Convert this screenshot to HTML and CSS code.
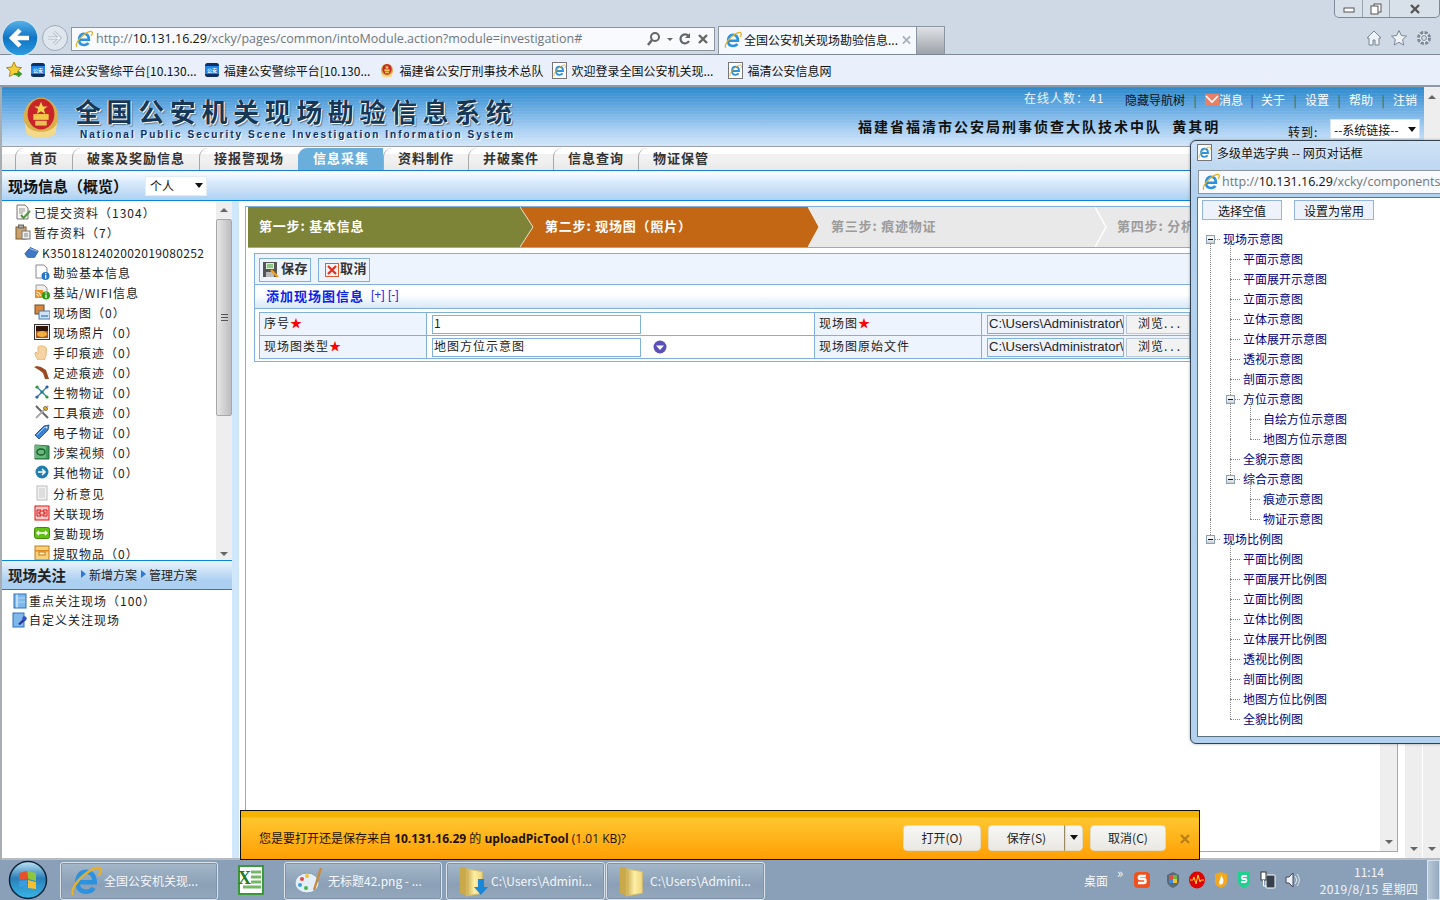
FILE: index.html
```
<!DOCTYPE html>
<html lang="zh-CN">
<head>
<meta charset="utf-8">
<title>全国公安机关现场勘验信息系统</title>
<link rel="stylesheet" href="styles.css">
</head>
<body>
<svg class="defs" width="0" height="0">
  <defs>
    <linearGradient id="gOrb" x1="0" y1="0" x2="0" y2="1"><stop offset="0" stop-color="#bfe3f7"/><stop offset=".45" stop-color="#2b7fb8"/><stop offset="1" stop-color="#38b6e8"/></linearGradient>
    <linearGradient id="gBack" x1="0" y1="0" x2="0" y2="1"><stop offset="0" stop-color="#5ab4ea"/><stop offset=".5" stop-color="#0f74c4"/><stop offset="1" stop-color="#2f9ce0"/></linearGradient>
    <linearGradient id="gFolder" x1="0" y1="0" x2="1" y2="0"><stop offset="0" stop-color="#c9a94a"/><stop offset=".5" stop-color="#fdeea6"/><stop offset="1" stop-color="#f1d67c"/></linearGradient>
    <symbol id="i-ie" viewBox="0 0 24 24"><path d="M5.500 13h13c0-5-2.600-8-6.500-8s-6.500 3.200-6.500 8 2.900 7 6.500 7c2.700 0 4.700-1 5.700-2.800" fill="none" stroke="#2c92df" stroke-width="3.400"/><path d="M2.500 22.500c-2.400-2.600 2-10.500 8.500-15.500S21.500 .8 23 3c.7 1.200-.2 3-1.500 4.800" fill="none" stroke="#e8b022" stroke-width="1.700"/></symbol>
    <symbol id="i-police" viewBox="0 0 16 16"><rect x="1" y="1" width="14" height="14" rx="2.500" fill="#0d2f66"/><rect x="1" y="4" width="14" height="8" fill="#1c86ea"/><text x="8" y="10.200" class="pol-t">公安</text></symbol>
    <symbol id="i-emblem" viewBox="0 0 40 48"><ellipse cx="20" cy="25" rx="18" ry="20" fill="#d9b04c"/><path d="M3 30c4 14 30 14 34 0l-2 13c-8 5-22 5-30 0z" fill="#f3d98a"/><ellipse cx="20" cy="22" rx="14" ry="16" fill="#c8242a"/><rect x="12" y="22" width="16" height="6" fill="#f0c84a"/><path d="M20 9l2 5h5l-4 3 1.500 5-4.500-3-4.500 3 1.500-5-4-3h5z" fill="#f6d64f"/><path d="M14 29h12v5H14z" fill="#eac054"/></symbol>
    <symbol id="i-docok" viewBox="0 0 16 16"><path d="M2 1h8l3 3v11H2z" fill="#f6f6f2" stroke="#777"/><path d="M4 5h6M4 7h6M4 9h4" stroke="#999"/><path d="M6 11l2.500 3L15 7" fill="none" stroke="#4a9a3a" stroke-width="2"/></symbol>
    <symbol id="i-clip" viewBox="0 0 16 16"><rect x="1" y="3" width="10" height="12" fill="#c8a46c" stroke="#7c5a2c"/><rect x="3.500" y="1" width="5" height="3" fill="#aaa" stroke="#666"/><rect x="7" y="7" width="8" height="8" fill="#eee" stroke="#777"/><path d="M9 10h4M9 12h4" stroke="#888"/></symbol>
    <symbol id="i-fold" viewBox="0 0 18 14"><path d="M1 9l6-7 9 4-4 7H4z" fill="#3f79c4" stroke="#2a5a9a"/><path d="M6 3l9 3" stroke="#a8c8ee"/></symbol>
    <symbol id="i-info" viewBox="0 0 16 16"><path d="M2 1h8l3 3v10H2z" fill="#fff" stroke="#888"/><circle cx="11.500" cy="12" r="4" fill="#2777c8"/><rect x="11" y="11" width="1.300" height="3.500" fill="#fff"/><rect x="11" y="9" width="1.300" height="1.300" fill="#fff"/></symbol>
    <symbol id="i-rss" viewBox="0 0 16 16"><path d="M2 1h8l3 3v6H2z" fill="#eee" stroke="#999"/><rect x="1" y="6" width="8" height="8" fill="#f09020"/><path d="M2.500 8a4 4 0 014 4M2.500 10.500a2 2 0 012 2" stroke="#fff" fill="none"/><circle cx="12" cy="11.500" r="4" fill="#2e9a18"/><rect x="11.400" y="10.500" width="1.300" height="3.500" fill="#fff"/><rect x="11.400" y="8.300" width="1.300" height="1.300" fill="#fff"/></symbol>
    <symbol id="i-pics" viewBox="0 0 16 16"><rect x="1" y="1" width="9" height="9" fill="#d9893c" stroke="#6a4a2a"/><rect x="5" y="7" width="11" height="8" fill="#cfe3f7" stroke="#4a78a8"/><rect x="7" y="11" width="7" height="2" fill="#6ba1d8"/></symbol>
    <symbol id="i-photo" viewBox="0 0 16 16"><rect x=".5" y=".5" width="15" height="15" fill="#eee" stroke="#333"/><rect x="2" y="2" width="12" height="12" fill="#a85a1c"/><ellipse cx="8" cy="10" rx="5" ry="3" fill="#f0b040"/><rect x="2" y="2" width="12" height="5" fill="#30140a"/></symbol>
    <symbol id="i-hand" viewBox="0 0 16 16"><path d="M4 16c-2-3-3-5-3-7l1-1 2 2V3l1.500-1L7 2l1 0 1.500 0L11 3l1.500 1-.5 7c0 2-1 4-2 5z" fill="#f5d3a2" stroke="#e4b87c"/></symbol>
    <symbol id="i-foot" viewBox="0 0 16 16"><path d="M0 3l3-1 4 1 5 3 2 6 1 3-4 0-2-6-4-3z" fill="#9a4a20"/></symbol>
    <symbol id="i-bio" viewBox="0 0 16 16"><path d="M2 14L14 2M3 3l10 10" stroke="#3a7a9a" stroke-width="1.300"/><circle cx="3" cy="3" r="1.600" fill="#2a9a3a"/><circle cx="13" cy="3" r="1.600" fill="#2a60b0"/><circle cx="3" cy="13" r="1.600" fill="#2a60b0"/><circle cx="13" cy="13" r="1.600" fill="#2a9a3a"/><circle cx="8" cy="8" r="1.600" fill="#1a7a8a"/></symbol>
    <symbol id="i-tool" viewBox="0 0 16 16"><path d="M2 2l12 12" stroke="#666" stroke-width="2"/><path d="M14 2L2 14" stroke="#aaa" stroke-width="2"/><path d="M11 2l3 3-2 2-3-3z" fill="#e0a820" stroke="#333" stroke-width=".5"/></symbol>
    <symbol id="i-tag" viewBox="0 0 16 16"><path d="M1 11L10 2l5-1-1 5-9 9z" fill="#3f7fd0" stroke="#2a5a9a"/><path d="M3 11l8-8" stroke="#a8c8f0"/><circle cx="12.500" cy="3.500" r="1" fill="#fff"/></symbol>
    <symbol id="i-film" viewBox="0 0 16 16"><path d="M1 1l14 1v13H1z" fill="#3c9a5a" stroke="#2a6a40"/><path d="M1 1l11 1v12H1z" fill="#6ab87a"/><ellipse cx="7" cy="8" rx="4" ry="3" fill="none" stroke="#1a5a30" stroke-width="1.400"/></symbol>
    <symbol id="i-go" viewBox="0 0 16 16"><circle cx="8" cy="8" r="6.500" fill="#1e7fb0"/><path d="M4 8h7M8 5l3 3-3 3" fill="none" stroke="#fff" stroke-width="1.500"/></symbol>
    <symbol id="i-note" viewBox="0 0 16 16"><rect x="3" y="1" width="10" height="14" fill="#f2f2f2" stroke="#bbb"/><path d="M5 4h6M5 6h6M5 8h6M5 10h6M5 12h6" stroke="#c8c8c8"/></symbol>
    <symbol id="i-link" viewBox="0 0 16 16"><rect x="1" y="1" width="14" height="14" fill="#ffc8c8" stroke="#e01010"/><path d="M3 5h4v2H5v2h2v2H3zM13 5H9v2h2v2H9v2h4z" fill="none" stroke="#d01010"/></symbol>
    <symbol id="i-swap" viewBox="0 0 16 12"><rect x=".5" y=".5" width="15" height="11" rx="2" fill="#62c010" stroke="#3f8a08"/><path d="M3 6h10M5 4L3 6l2 2M11 4l2 2-2 2" fill="none" stroke="#fff" stroke-width="1.400"/></symbol>
    <symbol id="i-box" viewBox="0 0 16 16"><rect x="1" y="1" width="14" height="14" fill="#f8d27a" stroke="#c47a1a"/><rect x="1" y="5" width="14" height="1.500" fill="#d88a20"/><rect x="5" y="7" width="6" height="3" fill="#fff3c8" stroke="#c47a1a"/></symbol>
    <symbol id="i-book" viewBox="0 0 14 16"><rect x="1" y="1" width="12" height="14" fill="#7fb8ea" stroke="#2a70b8"/><rect x="3.500" y="1.500" width="1" height="13" fill="#fff"/><path d="M5 5h7M5 9h7" stroke="#b8d8f4"/></symbol>
    <symbol id="i-pin" viewBox="0 0 16 16"><rect x="1" y="1" width="11" height="14" fill="#7fb8ea" stroke="#2a70b8"/><path d="M6 12l6-6 2 2-6 5z" fill="#2c3a9a"/><circle cx="12.500" cy="6.500" r="2.200" fill="#3050c8"/></symbol>
    <symbol id="i-folder" viewBox="0 0 32 36"><path d="M4 3h6l2 3v28l-8-3z" fill="#c9a94a"/><path d="M11 5l17 3v23l-17 3z" fill="url(#gFolder)" stroke="#d9bd66"/></symbol>
  </defs>
</svg>

<div class="screen">
  <header class="ie-top">
    <div class="win-row">
      <div class="win-btns">
        <span class="win-btn"><svg width="12" height="10" viewBox="0 0 12 10"><rect x="1" y="4" width="10" height="4" fill="#fff" stroke="#555"/></svg></span>
        <span class="win-btn win-mid"><svg width="12" height="12" viewBox="0 0 12 12"><rect x="4" y="1" width="7" height="8" fill="#fff" stroke="#555"/><rect x="1" y="3" width="7" height="8" fill="#fff" stroke="#555"/></svg></span>
        <span class="win-btn win-close"><svg width="12" height="12" viewBox="0 0 12 12"><path d="M2 2l8 8M10 2l-8 8" stroke="#555" stroke-width="2.400"/></svg></span>
      </div>
    </div>
    <div class="addr-row">
      <div class="nav-btns">
        <svg width="38" height="38" viewBox="0 0 38 38"><circle cx="19" cy="19" r="18" fill="url(#gBack)" stroke="#cfe0ee" stroke-width="1.500"/><path d="M28 19H12M19 11l-8 8 8 8" fill="none" stroke="#fff" stroke-width="4.500"/></svg>
        <svg width="30" height="30" viewBox="0 0 30 30"><circle cx="15" cy="15" r="12.500" fill="#dfe6ee" stroke="#9eaab8"/><path d="M8 15h12M14 9l6 6-6 6" fill="none" stroke="#aab6c4" stroke-width="3"/><path d="M8 15h12M14 9l6 6-6 6" fill="none" stroke="#eef2f6" stroke-width="1.400"/></svg>
      </div>
      <div class="addr">
        <svg class="ic-ie"><use href="#i-ie"/></svg>
        <span class="url"><span class="dim">http://</span>10.131.16.29<span class="dim">/xcky/pages/common/intoModule.action?module=investigation#</span></span>
        <span class="addr-tools">
          <svg width="16" height="16" viewBox="0 0 16 16"><circle cx="9" cy="6" r="4" fill="none" stroke="#666" stroke-width="2"/><path d="M6 9l-4 5" stroke="#666" stroke-width="2.500"/></svg>
          <svg width="8" height="14" viewBox="0 0 8 14"><path d="M1 6h6L4 9z" fill="#666"/></svg>
          <svg width="14" height="14" viewBox="0 0 14 14"><path d="M11 9a4.500 4.500 0 11-.5-5" fill="none" stroke="#666" stroke-width="2.200"/><path d="M12 1v5H7z" fill="#666"/></svg>
          <svg width="14" height="14" viewBox="0 0 14 14"><path d="M3 3l8 8M11 3l-8 8" stroke="#666" stroke-width="2.400"/></svg>
        </span>
      </div>
      <div class="ie-tab">
        <svg class="ic-ie"><use href="#i-ie"/></svg>
        <span class="tab-title">全国公安机关现场勘验信息...</span>
        <svg width="10" height="10" viewBox="0 0 10 10"><path d="M1 1l8 8M9 1l-8 8" stroke="#aab2bc" stroke-width="2"/></svg>
      </div>
      <div class="ie-newtab"></div>
      <div class="ie-tools">
        <svg width="18" height="18" viewBox="0 0 18 18"><path d="M9 2L2 9h2v7h4v-5h2v5h4V9h2z" fill="#eef3f8" stroke="#7a8794"/></svg>
        <svg width="18" height="18" viewBox="0 0 18 18"><path d="M9 1.500l2.300 5 5.200.6-3.900 3.500 1.100 5.400L9 13.300 4.300 16l1.100-5.400L1.500 7.100l5.200-.6z" fill="#eef3f8" stroke="#7a8794"/></svg>
        <svg width="18" height="18" viewBox="0 0 18 18"><circle cx="9" cy="9" r="5.500" fill="#eef3f8" stroke="#7a8794" stroke-width="3" stroke-dasharray="3 1.300"/><circle cx="9" cy="9" r="2.500" fill="#d0dae6" stroke="#7a8794"/></svg>
      </div>
    </div>
  </header>

  <nav class="favbar">
    <svg class="fav-star" width="18" height="18" viewBox="0 0 18 18"><path d="M9 1l2.300 5 5.200.6-3.900 3.500 1.100 5.400L9 13l-4.700 2.500 1.100-5.400L1.500 6.600l5.200-.6z" fill="#f4cf3a" stroke="#b08a18"/><path d="M9 13h7M13 10.500l3 2.500-3 2.500" fill="none" stroke="#3a9a2a" stroke-width="1.800"/></svg>
    <span class="fav"><svg class="ic"><use href="#i-police"/></svg>福建公安警综平台[10.130...</span>
    <span class="fav m9"><svg class="ic"><use href="#i-police"/></svg>福建公安警综平台[10.130...</span>
    <span class="fav m9"><svg class="ic"><use href="#i-emblem"/></svg>福建省公安厅刑事技术总队</span>
    <span class="fav m15"><span class="pg"><svg class="ic-s"><use href="#i-ie"/></svg></span>欢迎登录全国公安机关现...</span>
    <span class="fav"><span class="pg"><svg class="ic-s"><use href="#i-ie"/></svg></span>福清公安信息网</span>
  </nav>

  <div class="page">
    <div class="site-head">
      <div class="brand">
        <svg class="emblem"><use href="#i-emblem"/></svg>
        <div class="brand-text">
          <div class="brand-cn">全国公安机关现场勘验信息系统</div>
          <div class="brand-en">National Public Security Scene Investigation Information System</div>
        </div>
      </div>
      <div class="head-right">
        <div class="head-links">
          <span class="online">在线人数：41</span>
          <span class="hl-dark">隐藏导航树</span>
          <span class="sep">|</span>
          <span class="hl"><svg class="mail" viewBox="0 0 14 12"><rect width="14" height="12" fill="#e88068"/><path d="M1 2l6 6 6-6" fill="none" stroke="#fff" stroke-width="1.600"/></svg>消息</span>
          <span class="sep s18">|</span><span class="hl">关于</span>
          <span class="sep">|</span><span class="hl">设置</span>
          <span class="sep">|</span><span class="hl">帮助</span>
          <span class="sep">|</span><span class="hl">注销</span>
        </div>
        <div class="head-org">
          <span class="org">福建省福清市公安局刑事侦查大队技术中队&nbsp; 黄其明</span>
          <span class="goto">转到:</span>
          <span class="sys-select">--系统链接--<i class="caret"></i></span>
        </div>
      </div>
      <div class="head-scroll"><i class="up"></i></div>
    </div>

    <div class="main-nav">
      <a class="tab">首页</a>
      <a class="tab">破案及奖励信息</a>
      <a class="tab">接报警现场</a>
      <a class="tab active">信息采集</a>
      <a class="tab">资料制作</a>
      <a class="tab">并破案件</a>
      <a class="tab">信息查询</a>
      <a class="tab">物证保管</a>
    </div>

    <div class="sub-bar">
      <span class="sub-title">现场信息（概览）</span>
      <span class="scope">个人<i class="caret"></i></span>
    </div>

    <div class="work">
      <aside class="side">
        <div class="side-top">
          <ul class="tree">
            <li class="l0"><svg class="ic"><use href="#i-docok"/></svg>已提交资料（1304）</li>
            <li class="l0"><svg class="ic"><use href="#i-clip"/></svg>暂存资料（7）</li>
            <li class="l1"><svg class="ic"><use href="#i-fold"/></svg><span class="code">K3501812402002019080252</span></li>
            <li class="l2"><svg class="ic"><use href="#i-info"/></svg>勘验基本信息</li>
            <li class="l2"><svg class="ic"><use href="#i-rss"/></svg>基站/WIFI信息</li>
            <li class="l2"><svg class="ic"><use href="#i-pics"/></svg>现场图（0）</li>
            <li class="l2"><svg class="ic"><use href="#i-photo"/></svg>现场照片（0）</li>
            <li class="l2"><svg class="ic"><use href="#i-hand"/></svg>手印痕迹（0）</li>
            <li class="l2"><svg class="ic"><use href="#i-foot"/></svg>足迹痕迹（0）</li>
            <li class="l2"><svg class="ic"><use href="#i-bio"/></svg>生物物证（0）</li>
            <li class="l2"><svg class="ic"><use href="#i-tool"/></svg>工具痕迹（0）</li>
            <li class="l2"><svg class="ic"><use href="#i-tag"/></svg>电子物证（0）</li>
            <li class="l2"><svg class="ic"><use href="#i-film"/></svg>涉案视频（0）</li>
            <li class="l2"><svg class="ic"><use href="#i-go"/></svg>其他物证（0）</li>
            <li class="l2 nudge"><svg class="ic"><use href="#i-note"/></svg>分析意见</li>
            <li class="l2"><svg class="ic"><use href="#i-link"/></svg>关联现场</li>
            <li class="l2"><svg class="ic"><use href="#i-swap"/></svg>复勘现场</li>
            <li class="l2"><svg class="ic"><use href="#i-box"/></svg>提取物品（0）</li>
          </ul>
          <div class="vscroll">
            <i class="up"></i>
            <div class="thumb"><span class="grip"></span></div>
            <i class="down"></i>
          </div>
        </div>
        <div class="focus-head">
          <span class="focus-title">现场关注</span>
          <span class="focus-link">新增方案</span>
          <span class="focus-link">管理方案</span>
        </div>
        <ul class="focus-list">
          <li><svg class="ic"><use href="#i-book"/></svg>重点关注现场（100）</li>
          <li><svg class="ic"><use href="#i-pin"/></svg>自定义关注现场</li>
        </ul>
      </aside>

      <div class="strip"></div>

      <div class="frame">
        <main class="content">
          <div class="steps">
            <div class="step s1">第一步: 基本信息</div>
            <svg class="chev" viewBox="0 0 14 41" preserveAspectRatio="none"><rect width="14" height="41" fill="#c46715"/><path d="M0 0l13 20.500L0 41z" fill="#7d8438"/><path d="M0 0l13 20.500L0 41" fill="none" stroke="#fff" stroke-opacity=".8"/></svg>
            <div class="step s2">第二步: 现场图（照片）</div>
            <svg class="chev" viewBox="0 0 14 41" preserveAspectRatio="none"><rect width="14" height="41" fill="#e9e9e9"/><path d="M0 0l11 20.500L0 41z" fill="#c46715"/><path d="M0 0l11 20.500L0 41" fill="none" stroke="#fff" stroke-opacity=".8"/></svg>
            <div class="step s3">第三步: 痕迹物证</div>
            <svg class="chev" viewBox="0 0 14 41" preserveAspectRatio="none"><path d="M0 0l11 20.500L0 41" fill="none" stroke="#fff" stroke-width="1.500"/></svg>
            <div class="step s4">第四步: 分析意见</div>
          </div>
          <section class="panel">
            <div class="toolbar">
              <button class="tbtn"><svg width="18" height="18" viewBox="0 0 18 18"><rect x="1" y="1" width="14" height="15" fill="#555"/><rect x="4" y="2" width="8" height="6" fill="#dff0d8"/><path d="M5 4h6M5 6h6" stroke="#3a9a3a"/><rect x="4" y="11" width="8" height="5" fill="#bbb"/><path d="M9 9l7 7" stroke="#e8a030" stroke-width="2.400"/></svg>保存</button>
              <button class="tbtn"><svg width="14" height="14" viewBox="0 0 14 14"><rect x=".5" y=".5" width="13" height="13" fill="#f4f4f4" stroke="#e25a30"/><path d="M3 3l8 8M11 3l-8 8" stroke="#e03020" stroke-width="2.200"/></svg>取消</button>
            </div>
            <div class="panel-head"><span class="panel-title">添加现场图信息</span><span class="pm">[+] [-]</span></div>
            <table class="form">
              <colgroup><col class="c1"><col class="c2"><col class="c3"><col class="c4"></colgroup>
              <tr>
                <th>序号<span class="star">★</span></th>
                <td class="val"><span class="inp">1</span></td>
                <th>现场图<span class="star">★</span></th>
                <th class="file"><span class="file-in">C:\Users\Administrator\</span><span class="browse">浏览<span class="dots">...</span></span></th>
              </tr>
              <tr>
                <th>现场图类型<span class="star">★</span></th>
                <td class="val"><span class="inp">地图方位示意图</span><svg class="pick" width="14" height="14" viewBox="0 0 14 14"><circle cx="7" cy="7" r="6.500" fill="#5a50b8"/><path d="M3 5.500h8L7 10z" fill="#fff"/></svg></td>
                <th>现场图原始文件</th>
                <th class="file"><span class="file-in">C:\Users\Administrator\</span><span class="browse">浏览<span class="dots">...</span></span></th>
              </tr>
            </table>
          </section>
        </main>
        <div class="vbar inner"><i class="up"></i><i class="down"></i></div>
      </div>

      <div class="gap"></div>
      <div class="vbar"><i class="down"></i></div>
      <div class="vbar"><i class="down"></i></div>
    </div>
  </div>

  <footer class="taskbar">
    <svg class="orb" width="40" height="40" viewBox="0 0 40 40"><circle cx="20" cy="20" r="18.500" fill="url(#gOrb)" stroke="#10243a" stroke-width="1.500"/><path d="M11 13l8-2v8l-8 1z" fill="#e8502a"/><path d="M20 11l8 2v8l-8-2z" fill="#8cc63f"/><path d="M11 21l8-1v8l-8-1z" fill="#3a9be0"/><path d="M20 20l8 2v7l-8-1z" fill="#f6c02c"/></svg>
    <span class="tb-btn w158 first"><svg class="tb-ie"><use href="#i-ie"/></svg>全国公安机关现...</span>
    <span class="tb-plain"><svg width="32" height="32" viewBox="0 0 32 32"><path d="M4 2h24v28H4z" fill="#fff" stroke="#3a9a3a" stroke-width="2"/><path d="M16 8h10M16 13h10M16 18h10M8 23h18" stroke="#74b868" stroke-width="3"/><text x="3" y="20" class="xls">X</text></svg></span>
    <span class="tb-btn w158"><svg width="30" height="32" viewBox="0 0 30 32"><ellipse cx="13" cy="18" rx="12" ry="10" fill="#e4eef8" stroke="#8aa0b8"/><circle cx="8" cy="14" r="2" fill="#e24a3a"/><circle cx="13" cy="11" r="2" fill="#f2c230"/><circle cx="6" cy="20" r="2" fill="#3aa0e0"/><circle cx="12" cy="23" r="2" fill="#4ab84a"/><path d="M27 3l-7 22" stroke="#c88a3a" stroke-width="2.400"/></svg>无标题42.png - ...</span>
    <span class="tb-btn w159"><svg class="tb-fold"><use href="#i-folder"/></svg><svg class="dl" width="14" height="18" viewBox="0 0 14 18"><path d="M4 1h6v8h4l-7 8-7-8h4z" fill="#1a88d8"/></svg>C:\Users\Admini...</span>
    <span class="tb-btn w159"><svg class="tb-fold"><use href="#i-folder"/></svg>C:\Users\Admini...</span>
    <span class="tb-fill"></span>
    <span class="desk">桌面</span>
    <span class="chevs">»</span>
    <span class="tray">
      <svg class="tray-s" width="18" height="18" viewBox="0 0 18 18"><rect x="1" y="1" width="16" height="16" rx="4" fill="#f0521f"/><path d="M13 5H7c-1.500 0-1.500 3 0 3h4c2 0 2 4 0 4H5" fill="none" stroke="#fff" stroke-width="2.400"/></svg>
      <svg width="14" height="18" viewBox="0 0 14 18"><path d="M7 1l6 3v6c0 4-4 6-6 7-2-1-6-3-6-7V4z" fill="#5a6a78"/><rect x="3" y="4" width="4" height="4" fill="#e24a3a"/><rect x="7" y="4" width="4" height="4" fill="#6ab83a"/><rect x="3" y="8" width="4" height="4" fill="#3a8ae0"/><rect x="7" y="8" width="4" height="4" fill="#f2c230"/></svg>
      <svg width="16" height="18" viewBox="0 0 16 18"><ellipse cx="8" cy="9" rx="8" ry="8.500" fill="#e00000"/><path d="M1 9h3l1-3 2 7 2-9 2 7 1-2h3" fill="none" stroke="#f4e020"/></svg>
      <svg width="14" height="18" viewBox="0 0 14 18"><path d="M7 1l6 2v7c0 4-3 6-6 7-3-1-6-3-6-7V3z" fill="#f2a81e"/><path d="M7 4c2 3 3 5 2 8-1 2-4 2-4 0 0-2 2-4 2-8z" fill="#fff"/></svg>
      <svg width="14" height="18" viewBox="0 0 14 18"><path d="M7 1h6v9c0 4-3 6-6 7-3-1-6-3-6-7V1z" fill="#1fd08e"/><path d="M10 5H6c-1.500 0-1.500 3 0 3h2c2 0 2 3 0 3H4" fill="none" stroke="#fff" stroke-width="1.800"/></svg>
      <svg width="16" height="18" viewBox="0 0 16 18"><rect x="6" y="4" width="9" height="13" rx="1" fill="#35404c" stroke="#fff"/><rect x="1" y="1" width="5" height="8" fill="#fff" stroke="#333"/><path d="M3.500 9v6h3" fill="none" stroke="#fff"/></svg>
      <svg width="16" height="18" viewBox="0 0 16 18"><path d="M1 6h3l4-4v14l-4-4H1z" fill="#eef2f6" stroke="#445"/><path d="M10 5c2 2 2 6 0 8M12 3c3 3 3 9 0 12" fill="none" stroke="#e4eaf0"/></svg>
    </span>
    <span class="clock"><span>11:14</span><span class="date">2019/8/15 星期四</span></span>
    <span class="show-desk"></span>
  </footer>

  <div class="dialog">
    <div class="dlg-title"><span class="pg"><svg class="ic-s"><use href="#i-ie"/></svg></span>多级单选字典 -- 网页对话框</div>
    <div class="dlg-addr"><svg class="ic-ie"><use href="#i-ie"/></svg><span class="url"><span class="dim">http://</span>10.131.16.29<span class="dim">/xcky/components/</span></span></div>
    <div class="dlg-body">
      <div class="dlg-btns"><button class="dbtn">选择空值</button><button class="dbtn">设置为常用</button></div>
      <ul class="dict">
        <li class="open"><i class="tog"></i>现场示意图
          <ul>
            <li>平面示意图</li><li>平面展开示意图</li><li>立面示意图</li><li>立体示意图</li><li>立体展开示意图</li><li>透视示意图</li><li>剖面示意图</li>
            <li class="open"><i class="tog"></i>方位示意图
              <ul><li>自绘方位示意图</li><li>地图方位示意图</li></ul>
            </li>
            <li>全貌示意图</li>
            <li class="open"><i class="tog"></i>综合示意图
              <ul><li>痕迹示意图</li><li>物证示意图</li></ul>
            </li>
          </ul>
        </li>
        <li class="open"><i class="tog"></i>现场比例图
          <ul>
            <li>平面比例图</li><li>平面展开比例图</li><li>立面比例图</li><li>立体比例图</li><li>立体展开比例图</li><li>透视比例图</li><li>剖面比例图</li><li>地图方位比例图</li><li>全貌比例图</li>
          </ul>
        </li>
      </ul>
    </div>
  </div>

  <div class="dlbar">
    <div class="dl-msg">您是要打开还是保存来自 <b>10.131.16.29</b> 的 <b>uploadPicTool</b> (1.01 KB)?</div>
    <div class="dl-acts">
      <button class="dl-btn w78">打开(O)</button>
      <span class="dl-split"><button class="dl-btn w77">保存(S)</button><button class="dl-btn w18"><i class="caret"></i></button></span>
      <button class="dl-btn w76">取消(C)</button>
      <svg class="dl-x" width="10" height="10" viewBox="0 0 10 10"><path d="M1 1l8 8M9 1l-8 8" stroke="#b8801a" stroke-width="2.400"/></svg>
    </div>
  </div>
</div>
</body>
</html>
```

FILE: styles.css
```
* { box-sizing: border-box; }
html, body { margin: 0; padding: 0; }
body { font-family: "Noto Sans CJK SC", sans-serif; font-size: 12px; color: #111; overflow: hidden; background: #fff; }
ul { list-style: none; margin: 0; padding: 0; }
.defs { position: absolute; }
.screen { position: relative; width: 1440px; height: 900px; display: flex; flex-direction: column; overflow: hidden; }

.ic { width: 16px; height: 16px; flex: none; }
.ic-ie { width: 18px; height: 18px; flex: none; }
.ic-s { width: 13px; height: 13px; }
.pol-t { font: 700 5px "Noto Sans CJK SC", sans-serif; fill: #fff; text-anchor: middle; }
.dim { color: #6f7780; }
.url { font-family: "Open Sans", "Noto Sans CJK SC", sans-serif; font-size: 12.500px; line-height: 16px; color: #111; white-space: nowrap; }

/* IE chrome */
.ie-top { height: 55px; background: #cfd9e5; flex: none; border-bottom: 1px solid #7e8a96; }
.win-row { height: 26px; display: flex; justify-content: flex-end; }
.win-btns { width: 106px; height: 18px; margin-left: auto; display: flex; border: 1px solid #7c8a98; border-top: 0; border-radius: 0 0 5px 5px; background: #d8e1ea; }
.win-btn { flex: none; width: 27px; display: flex; align-items: center; justify-content: center; }
.win-mid { border-left: 1px solid #9aa6b2; border-right: 1px solid #9aa6b2; width: 28px; }
.win-close { flex: 1; width: auto; }
.addr-row { display: flex; height: 28px; align-items: flex-start; }
.nav-btns { width: 71px; height: 28px; display: flex; margin-top: -2px; padding-left: 1px; align-items: center; flex: none; }
.nav-btns svg + svg { margin-left: 1px; }
.addr { width: 644px; height: 24px; margin-top: 1px; background: #f8fafd; border: 1px solid #8b96a2; display: flex; align-items: center; padding: 0 4px 0 3px; flex: none; }
.addr .url { margin-left: 3px; flex: 1; padding-bottom: 1px; }
.addr-tools { display: flex; align-items: center; gap: 4px; }
.ie-tab { width: 199px; height: 28px; margin-left: 3px; background: #f5f9fe; border: 1px solid #8b96a2; border-bottom: 0; display: flex; align-items: center; padding: 0 5px 2px; font-size: 12px; color: #111; flex: none; }
.tab-title { margin: 0 4px 0 2px; white-space: nowrap; flex: 1; }
.ie-newtab { width: 28px; height: 28px; background: linear-gradient(#e0e2e6, #9da2a8); border: 1px solid #8b96a2; border-left: 0; border-bottom: 0; flex: none; }
.ie-tools { margin-left: auto; display: flex; gap: 7px; padding: 3px 7px 0 0; }

.favbar { height: 32px; flex: none; background: #e9f0fb; border-bottom: 2px solid #8f9aa5; display: flex; align-items: center; padding-left: 5px; }
.fav-star { margin-right: 7px; }
.fav { display: flex; align-items: center; gap: 4px; white-space: nowrap; margin-right: 7px; font-size: 12px; color: #111; }
.fav.m9 { margin-right: 9px; }
.fav.m15 { margin-right: 15px; }
.pg { width: 15px; height: 17px; background: #fff; border: 1px solid #777; display: flex; align-items: center; justify-content: center; flex: none; }

/* page */
.page { flex: 1; min-height: 0; display: flex; flex-direction: column; border-left: 2px solid #a8adb2; }
.site-head { height: 60px; flex: none; display: flex; background: repeating-linear-gradient(#ffffff0f 0 1px, #00000000 1px 3px), linear-gradient(#2b89cd, #6fafe4 40%, #a8cff2 72%, #d3e6f9); border-bottom: 1px solid #9aa0a6; }
.brand { width: 830px; flex: none; display: flex; padding: 9px 0 0 19px; }
.emblem { width: 40px; height: 46px; margin-top: -3px; }
.brand-text { margin-left: 14px; }
.brand-cn { font-size: 26px; line-height: 30px; font-weight: 700; letter-spacing: 5.600px; color: #173757; white-space: nowrap; text-shadow: 1px 1px 0 #fff, -1px 0 0 #dfeeff, 2px 2px 1px #5a7a9a; }
.brand-en { margin: 3px 0 0 5px; font-family: "Liberation Sans", sans-serif; font-weight: 700; font-size: 10px; line-height: 12px; letter-spacing: 2.030px; color: #0d2f66; white-space: nowrap; text-shadow: 1px 1px 0 #fff; }
.head-right { flex: 1; min-width: 0; display: flex; flex-direction: column; }
.head-links { height: 22px; padding-top: 3px; display: flex; align-items: center; white-space: nowrap; font-size: 12px; }
.online { width: 101px; margin-left: 192px; color: #eef6ff; letter-spacing: 1px; font-size: 12px; margin-top: -4px; }
.hl-dark { color: #111; }
.hl { color: #fff; display: flex; align-items: center; }
.sep { color: #456; width: 20px; text-align: center; }
.sep.s18 { width: 18px; }
.mail { width: 14px; height: 12px; }
.head-org { display: flex; align-items: center; margin-top: 8px; white-space: nowrap; }
.org { margin: -5px 0 0 26px; width: 430px; font-size: 14px; font-weight: 700; letter-spacing: 2px; color: #111; }
.goto { letter-spacing: 1px; margin-top: 6px; color: #111; width: 42px; }
.sys-select { width: 90px; height: 20px; margin-top: 1px; background: #fff; border: 1px solid #d9e6f2; display: flex; align-items: center; padding-left: 3px; font-size: 12px; }
.caret { display: inline-block; border-top: 5px solid #111; border-left: 4px solid transparent; border-right: 4px solid transparent; }
.sys-select .caret, .scope .caret { margin-left: auto; margin-right: 3px; }
.head-scroll { width: 16px; background: #eeeeee; flex: none; display: flex; justify-content: center; padding-top: 8px; }
.up { display: block; border-bottom: 4px solid #666; border-left: 4px solid transparent; border-right: 4px solid transparent; width: 0; height: 0; }
.down { display: block; border-top: 4px solid #666; border-left: 4px solid transparent; border-right: 4px solid transparent; width: 0; height: 0; }

.main-nav { height: 24px; flex: none; display: flex; padding-left: 13px; background: linear-gradient(#fff 0, #fff 30%, #f1f1f1 30%, #f1f1f1 55%, #e8e8e8 100%); border-bottom: 1px solid #1a80c8; }
.tab { padding: 0 14px; font-size: 13px; font-weight: 700; letter-spacing: 1px; line-height: 20px; color: #333; border-left: 1px solid #a8a8a8; border-radius: 9px 0 0 0; white-space: nowrap; margin-top: 1px; }
.tab.active { background: #6aaedc; color: #fff; border-left-color: #6aaedc; }

.sub-bar { height: 29px; flex: none; display: flex; align-items: center; padding: 0 0 0 6px; background: linear-gradient(#fff 0, #dcecfb 35%, #aed1f2 100%); }
.sub-title { width: 137px; font-size: 15px; font-weight: 700; color: #111; white-space: nowrap; }
.scope { width: 62px; height: 20px; background: #fff; display: flex; align-items: center; padding-left: 4px; border: 1px solid #e2edf7; font-size: 12px; }

.work { flex: 1; min-height: 0; display: flex; border-top: 1px solid #0a84d8; border-bottom: 2px solid #b6bcc2; }
.side { width: 230px; flex: none; display: flex; flex-direction: column; background: #fff; }
.side-top { height: 359px; display: flex; overflow: hidden; flex: none; }
.tree { flex: 1; min-width: 0; padding-top: 1px; overflow: hidden; font-size: 12px; letter-spacing: 1px; color: #222; }
.tree li { height: 20px; display: flex; align-items: center; white-space: nowrap; }
.tree li .ic { margin-right: 3px; }
.tree .l0 { padding-left: 13px; }
.tree .l1 { padding-left: 22px; }
.tree .l2 { padding-left: 32px; }
.tree .nudge { margin-top: 1px; }
.code { letter-spacing: .350px; margin-left: -1px; }
.vscroll { width: 16px; flex: none; background: #eeeeee; display: flex; flex-direction: column; align-items: center; padding-top: 7px; }
.thumb { width: 16px; height: 197px; margin-top: 7px; background: linear-gradient(90deg, #e6e6e6, #bdbdbd); border: 1px solid #a8a8a8; border-radius: 2px; display: flex; align-items: center; justify-content: center; }
.grip { width: 7px; height: 7px; border-top: 1px solid #555; border-bottom: 1px solid #555; background: linear-gradient(#0000 45%, #555 45%, #555 55%, #0000 55%); }
.vscroll .down { margin-top: auto; margin-bottom: 4px; }
.focus-head { height: 30px; flex: none; display: flex; align-items: center; padding: 0 0 2px 6px; white-space: nowrap; background: linear-gradient(#eaf3fc, #acd0f1 70%); border-top: 1px solid #0a84d8; border-bottom: 1px solid #0a84d8; }
.focus-title { width: 73px; font-size: 14.500px; font-weight: 700; color: #222; }
.focus-link { display: flex; align-items: center; font-size: 12px; color: #222; }
.focus-link::before { content: ""; border-left: 5px solid #2f78d8; border-top: 4px solid transparent; border-bottom: 4px solid transparent; margin-right: 3px; }
.focus-link + .focus-link { margin-left: 4px; }
.focus-list { padding: 1px 0 0 10px; letter-spacing: 1px; color: #222; }
.focus-list li { height: 19px; display: flex; align-items: center; white-space: nowrap; gap: 1px; }
.strip { width: 7px; flex: none; background: #cfe6fb; }
.frame { width: 1153px; flex: none; margin: 5px 0 6px 6px; border: 1px solid #80b0dc; background: #fff; display: flex; overflow: hidden; }
.content { flex: 1; min-width: 0; padding-left: 2px; overflow: hidden; }
.steps { height: 41px; display: flex; background: #e9e9e9; border-bottom: 1px solid #80b0dc; }
.step { height: 40px; line-height: 38px; font-size: 13px; font-weight: 700; letter-spacing: .8px; white-space: nowrap; flex: none; }
.chev { width: 14px; height: 40px; flex: none; }
.s1 { width: 272px; padding-left: 11px; background: #7d8438; color: #fff; }
.s2 { width: 274px; padding-left: 11px; background: #c46715; color: #fff; }
.s3 { width: 273px; padding-left: 9px; color: #9c9c9c; }
.s4 { width: 260px; padding-left: 8px; color: #9c9c9c; }
.panel { margin: 5px 3px 0 6px; border: 1px solid #80b0dc; height: 109px; background: #fff; }
.toolbar { height: 31px; background: #edf4fd; border-bottom: 1px solid #80b0dc; display: flex; align-items: center; gap: 7px; padding: 1px 0 0 4px; }
.tbtn { height: 24px; width: 52px; background: #edf4fd; border: 1px solid #80b0dc; padding: 0 0 4px 2px; font: 700 13px "Noto Sans CJK SC", sans-serif; letter-spacing: .6px; color: #333; display: flex; align-items: center; white-space: nowrap; }
.tbtn svg { flex: none; margin: 4px 1px 0 0; }
.tbtn + .tbtn { padding-left: 6px; }
.panel-head { height: 24px; background: linear-gradient(#fff 40%, #d8e8f8); border-bottom: 1px solid #80b0dc; display: flex; align-items: center; padding: 0 0 3px 11px; }
.panel-title { font-size: 13px; font-weight: 700; letter-spacing: 1px; color: #0a24e8; width: 105px; white-space: nowrap; }
.pm { font-family: "Liberation Sans", sans-serif; font-size: 12px; color: #2a2ae0; }
.form { border-collapse: collapse; table-layout: fixed; width: 930px; margin: 3px 0 0 4px; }
.c1 { width: 167px; } .c2 { width: 388px; } .c3 { width: 167px; } .c4 { width: 208px; }
.form th, .form td { height: 23px; line-height: 15px; border: 1px solid #80b0dc; padding: 0 0 4px 4px; font-size: 12px; font-weight: 400; text-align: left; letter-spacing: 1px; white-space: nowrap; overflow: hidden; color: #222; }
.form th { background: #edf4fd; }
.form .val { background: #fff; padding: 0 0 0 5px; }
.star { color: #f00; letter-spacing: 0; }
.inp { display: inline-block; vertical-align: middle; width: 209px; height: 19px; line-height: 14px; border: 1px solid #80b0dc; padding-left: 1px; background: #fff; }
.pick { vertical-align: middle; margin-left: 12px; }
.form .file { padding: 0 0 0 5px; }
.file-in { display: inline-block; vertical-align: middle; width: 137px; height: 19px; padding-left: 1px; border: 1px solid #80b0dc; background: #edf3f9; overflow: hidden; font: 13px/15px "Liberation Sans", sans-serif; letter-spacing: 0; }
.browse { display: inline-block; vertical-align: middle; width: 70px; height: 19px; line-height: 14px; padding-left: 11px; margin-left: 2px; border: 1px solid #b8c8d8; background: #f2f2f2; letter-spacing: 1px; }
.dots { letter-spacing: 3px; }
.vbar { width: 17px; flex: none; background: #eeeeee; display: flex; flex-direction: column; align-items: center; padding: 0 0 7px; justify-content: flex-end; }
.vbar.inner { width: 17px; }
.vbar .up { margin-bottom: auto; margin-top: 8px; }
.gap { width: 7px; flex: none; background: #fff; }
.vbar + .vbar { margin-left: 1px; }

/* taskbar */
.taskbar { height: 40px; flex: none; background: #8aa0b8; display: flex; align-items: center; padding-left: 8px; color: #f4f7fa; font-size: 12px; white-space: nowrap; }
.orb { flex: none; }
.tb-btn { height: 38px; margin-top: 1px; display: flex; align-items: center; padding-left: 9px; gap: 4px; background: linear-gradient(#a5b8ca, #8ba0b6 60%, #93a7bc); border: 1px solid #dbe4ec; border-radius: 3px; box-shadow: inset 0 0 0 1px #7e92a8; overflow: hidden; flex: none; }
.w158 { width: 158px; }
.w159 { width: 159px; margin-left: 4px; }
.first { margin-left: 12px; gap: 2px; }
.tb-ie { width: 32px; height: 32px; flex: none; }
.tb-plain { width: 66px; display: flex; justify-content: center; flex: none; }
.xls { font: 700 18px "Liberation Serif", serif; fill: #1e7a1e; }
.w159 + .w159 { margin-left: 1px; }
.tb-fold { width: 30px; height: 34px; flex: none; }
.dl { margin: 12px -1px 0 -16px; flex: none; }
.tb-fill { flex: 1; }
.desk { font-size: 12px; margin-right: 9px; }
.chevs { width: 16px; margin-top: -16px; font-size: 13px; }
.tray { display: flex; align-items: center; gap: 9px; margin-right: 12px; }
.tray-s { margin-right: 6px; }
.clock { width: 112px; text-align: center; display: flex; flex-direction: column; line-height: 17px; font-size: 12px; color: #f0f4f8; }
.date { letter-spacing: .3px; }
.show-desk { width: 13px; height: 40px; margin-left: 2px; background: linear-gradient(90deg, #b7c8d8, #95abc0); border: 1px solid #d8e2ec; flex: none; }

/* dialog */
.dialog { position: absolute; left: 1190px; top: 140px; width: 258px; height: 604px; background: linear-gradient(#cfe2f5, #b2d1ee 8%, #b2d1ee); border: 1px solid #33404e; border-radius: 6px; padding: 0 0 6px 6px; display: flex; flex-direction: column; box-shadow: 0 0 3px #0005; }
.dlg-title { height: 26px; margin-bottom: 2px; display: flex; align-items: center; gap: 5px; padding: 0 0 3px 0; font-size: 12px; color: #111; text-shadow: 0 0 4px #fff; flex: none; }
.dlg-addr { height: 24px; margin: 1px 0 3px 1px; background: #f8fafd; border: 1px solid #8b96a2; display: flex; align-items: center; padding-left: 3px; gap: 2px; flex: none; white-space: nowrap; overflow: hidden; }
.dlg-body { flex: 1; background: #fff; border: 1px solid #5b7284; padding: 2px 0 0 4px; overflow: hidden; }
.dlg-btns { display: flex; gap: 12px; height: 20px; }
.dbtn { width: 80px; height: 20px; padding: 0; background: #eef3fb; border: 1px solid #93b5e0; font: 12px "Noto Sans CJK SC", sans-serif; color: #111; }
.dict { margin: 9px 0 0 0; padding: 0 0 0 21px; color: #000080; font-size: 12px; white-space: nowrap; }
.dict ul { padding-left: 20px; }
.dict li { position: relative; line-height: 20px; }
.dict li::before { content: ""; position: absolute; left: -13px; top: -10px; bottom: 10px; border-left: 1px dotted #888; }
.dict li:last-child::before { bottom: auto; height: 20px; }
.dict li::after { content: ""; position: absolute; left: -13px; top: 10px; width: 10px; border-top: 1px dotted #888; }
.dict > li:first-child::before { top: 10px; bottom: 0; height: auto; }
.tog { position: absolute; left: -17px; top: 6px; width: 9px; height: 9px; background: linear-gradient(#f4f4f4 45%, #c4d0dc); border: 1px solid #8aa0b8; z-index: 1; }
.tog::after { content: ""; position: absolute; left: 1px; top: 3px; width: 5px; height: 1px; background: #111; }

/* download bar */
.dlbar { position: absolute; left: 240px; top: 810px; width: 960px; height: 50px; border: 1px solid #111; background: linear-gradient(#f3b300 0, #f3b300 6px, #ffc62e 7px, #ff9f05 100%); display: flex; align-items: center; padding: 5px 0 0 18px; }
.dl-msg { flex: 1; font-family: "Open Sans", "Noto Sans CJK SC", sans-serif; font-size: 12px; color: #1c1204; white-space: nowrap; }
.dl-acts { display: flex; align-items: center; gap: 7px; }
.dl-split { display: flex; }
.dl-btn { height: 26px; padding: 0; background: linear-gradient(#f6f6f4, #e9e8e3); border: 1px solid #e3dac4; border-radius: 4px; font: 12px "Noto Sans CJK SC", sans-serif; color: #222; display: flex; align-items: center; justify-content: center; }
.w78 { width: 78px; } .w76 { width: 76px; } .w77 { width: 77px; border-radius: 4px 0 0 4px; border-right: 1px solid #9a8a66; } .w18 { width: 18px; border-radius: 0 4px 4px 0; }
.dl-x { margin: 2px 9px 0 7px; }
```
